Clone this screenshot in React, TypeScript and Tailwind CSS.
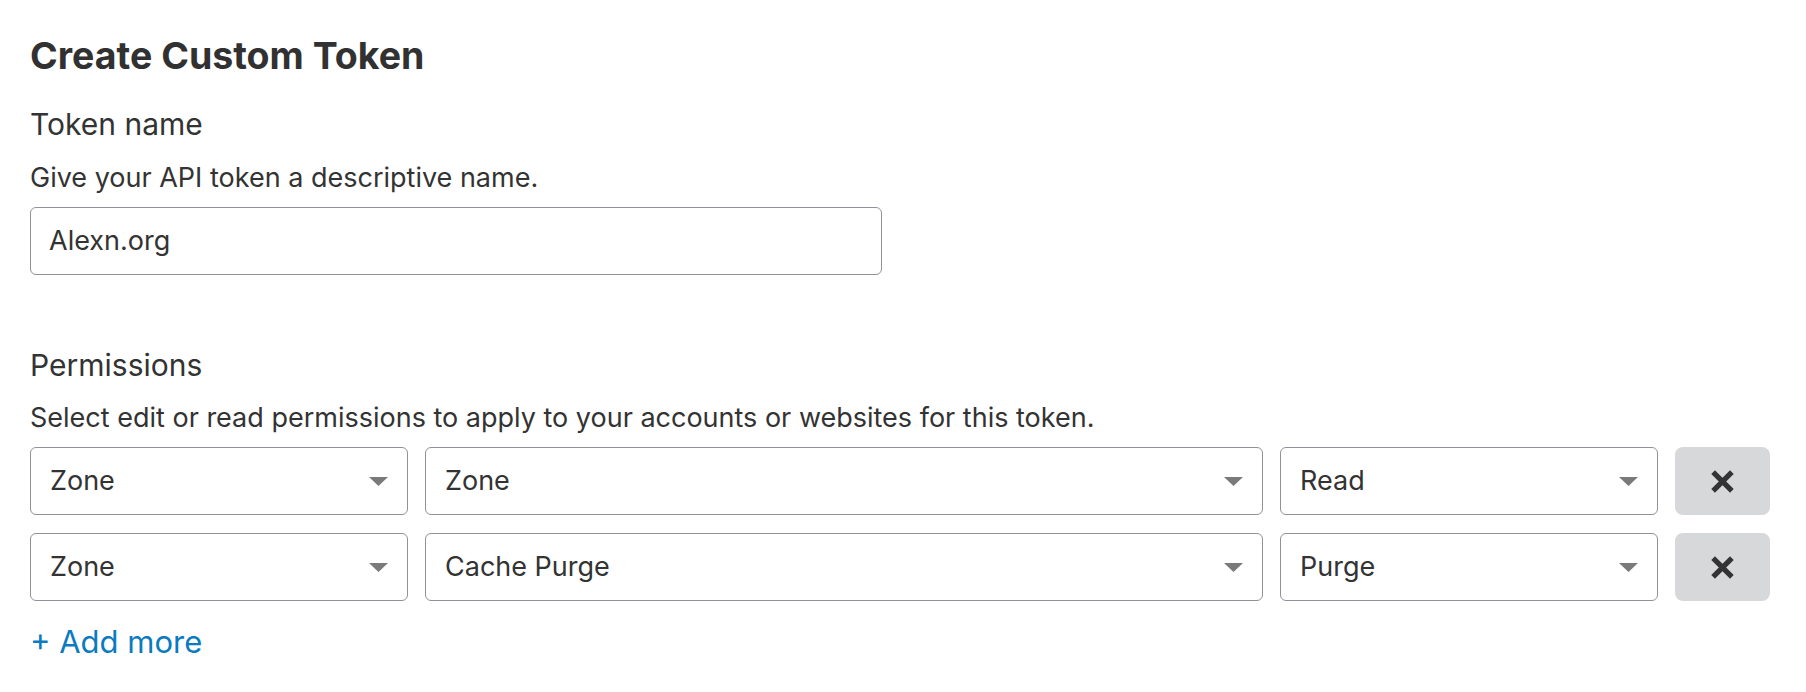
import React from 'react';

const font = { fontFamily: 'Inter, "Noto Sans", sans-serif' };

function Caret() {
  return (
    <svg width="19" height="9" viewBox="0 0 19 9" className="shrink-0">
      <path d="M0 0 H19 L9.5 9 Z" fill="#7a7a7a" />
    </svg>
  );
}

function Select({ value, width }: { value: string; width: string }) {
  return (
    <div className={`${width} h-[68px] border border-[#8f9296] rounded-[6px] bg-white flex items-center justify-between pl-[19px] pr-[19px]`}>
      <span className="text-[27px] leading-[32px] text-[#333]">{value}</span>
      <Caret />
    </div>
  );
}

function RemoveButton() {
  return (
    <button className="w-[95px] h-[68px] rounded-[8px] bg-[#d7d8da] flex items-center justify-center">
      <svg width="25" height="25" viewBox="0 0 24 24">
        <path d="M3 3 L21 21 M21 3 L3 21" stroke="#333" strokeWidth="5" strokeLinecap="butt" />
      </svg>
    </button>
  );
}

const rows = [
  { a: 'Zone', b: 'Zone', c: 'Read' },
  { a: 'Zone', b: 'Cache Purge', c: 'Purge' },
];

export default function App() {
  return (
    <div className="min-h-screen bg-white pl-[30px] pt-[34px] text-[#333]" style={font}>
      <h1 className="text-[37.5px] leading-[44px] font-bold text-[#313131]">Create Custom Token</h1>

      <div className="mt-[28px] text-[30px] leading-[36px]">Token name</div>
      <p className="mt-[20px] text-[27px] leading-[32px]">Give your API token a descriptive name.</p>
      <div className="mt-[13px] w-[852px] h-[68px] border border-[#8f9296] rounded-[6px] flex items-center px-[18px]">
        <span className="text-[27px] leading-[32px]">Alexn.org</span>
      </div>

      <div className="mt-[72px] text-[30px] leading-[36px]">Permissions</div>
      <p className="mt-[19px] text-[27px] leading-[32px]">
        Select edit or read permissions to apply to your accounts or websites for this token.
      </p>

      <div className="mt-[13px] flex flex-col gap-[18px]">
        {rows.map((r, i) => (
          <div key={i} className="flex gap-[17px]">
            <Select value={r.a} width="w-[378px]" />
            <Select value={r.b} width="w-[838px]" />
            <Select value={r.c} width="w-[378px]" />
            <RemoveButton />
          </div>
        ))}
      </div>

      <button className="mt-[23px] block text-[31px] leading-[36px] text-[#0a7bbf]">+ Add more</button>
    </div>
  );
}
